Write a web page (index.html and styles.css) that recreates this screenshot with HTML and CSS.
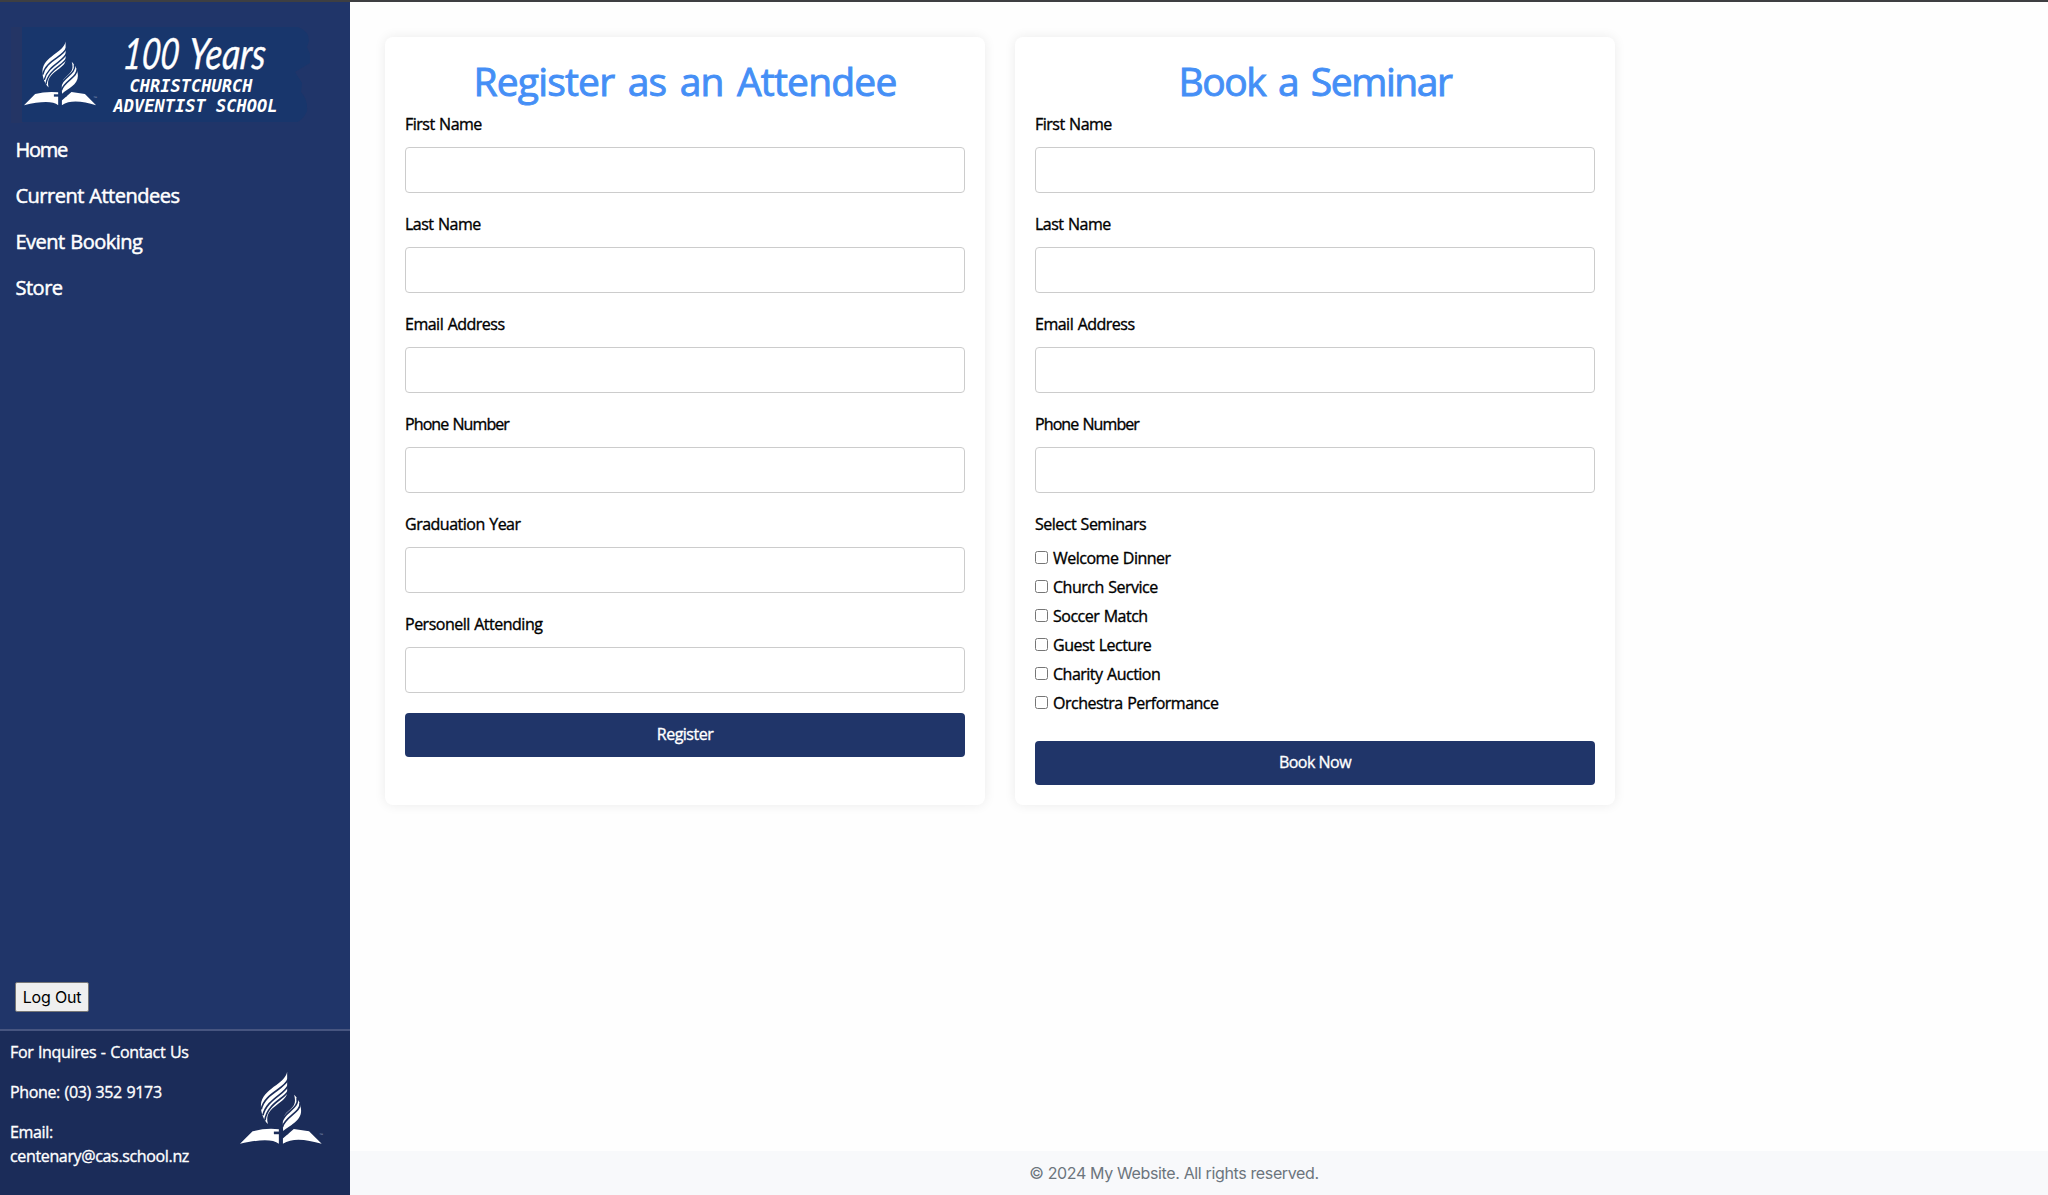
FILE: index.html
```html
<!DOCTYPE html>
<html lang="en">
<head>
<meta charset="utf-8">
<title>Christchurch Adventist School Centenary</title>
<link rel="stylesheet" href="styles.css">
</head>
<body>
<svg class="defs" width="0" height="0" aria-hidden="true">
  <symbol id="mark" viewBox="45 37 256 220" overflow="visible">
    <g fill="#fff">
      <path d="M187 38C181 76 112 88 108 138C107 162 117 184 129 195C122 166 134 154 160 134C180 119 187 112 187 98Z"/>
      <path d="M208 107C215 133 208 142 190 157C175 170 172 180 175 216C194 199 229 187 229 155C229 136 220 119 208 107Z"/>
      <path d="M45 255L83 217Q120 207 162 211V255C143 239 100 242 45 255Z"/>
      <path d="M174 255V239L207 210L253 217L291 255C246 242 204 235 174 255Z"/>
    </g>
    <g class="gap" fill="none" stroke-width="5">
      <path d="M190 60C180 91 119 102 109 151M190 79C181 105 125 121 114 169M190 96C180 119 127 133 120 184"/>
      <path d="M217 116C225 149 178 158 172 187M226 132C229 160 181 173 173 204"/>
      <path d="M147 222H190" stroke-width="8"/>
      <path d="M168 200V257" stroke-width="10"/>
    </g>
  </symbol>
</svg>
<div class="topline"></div>
<div class="app">
  <aside class="sidebar">
    <div class="logo">
      <svg class="logo-art" width="300" height="96" viewBox="0 0 300 96" role="img">
        <path fill="#243565" d="M0 0H12V96H0Z"/>
        <path fill="#18366c" d="M11 0H287Q298 4 298 14L296 20L299 27V36L284 45L291 56L290 65Q297 73 296 84Q292 93 286 95H11Z"/>
        <use href="#mark" x="13" y="14" width="75" height="65"/>
        <text class="tm" x="82" y="72">™</text>
        <text class="script" transform="translate(111 42) skewX(-6)" textLength="56" lengthAdjust="spacingAndGlyphs">100</text>
        <text class="script" transform="translate(177 42) skewX(-4)" textLength="77" lengthAdjust="spacingAndGlyphs">Years</text>
        <text class="school" x="118.500" y="65" textLength="123">CHRISTCHURCH</text>
        <text class="school" x="102.500" y="85" textLength="164">ADVENTIST SCHOOL</text>
      </svg>
    </div>
    <nav class="nav">
      <a class="tight">Home</a><a>Current Attendees</a><a>Event Booking</a><a>Store</a>
    </nav>
    <button class="logout">Log Out</button>
    <div class="contact">
      <div class="contact-text">
        <p>For Inquires - Contact Us</p>
        <p>Phone: (03) 352 9173</p>
        <p class="mail">Email: centenary@cas.school.nz</p>
      </div>
      <svg class="contact-mark" width="85" height="74"><use href="#mark" width="85" height="74"/><text class="tm" x="79" y="65">™</text></svg>
    </div>
  </aside>
  <div class="page">
    <main class="cards">
      <form class="card">
        <h1 class="t-register">Register as an Attendee</h1>
        <label>First Name</label><input type="text">
        <label>Last Name</label><input type="text">
        <label>Email Address</label><input type="text">
        <label class="narrow">Phone Number</label><input type="text">
        <label>Graduation Year</label><input type="text">
        <label>Personell Attending</label><input type="text">
        <button class="submit" type="button">Register</button>
      </form>
      <form class="card">
        <h1 class="t-book">Book a Seminar</h1>
        <label>First Name</label><input type="text">
        <label>Last Name</label><input type="text">
        <label>Email Address</label><input type="text">
        <label class="narrow">Phone Number</label><input type="text">
        <label class="group-label">Select Seminars</label>
        <div class="checks">
          <div class="check"><input type="checkbox"><span>Welcome Dinner</span></div>
          <div class="check"><input type="checkbox"><span>Church Service</span></div>
          <div class="check"><input type="checkbox"><span>Soccer Match</span></div>
          <div class="check"><input type="checkbox"><span>Guest Lecture</span></div>
          <div class="check"><input type="checkbox"><span>Charity Auction</span></div>
          <div class="check"><input type="checkbox"><span>Orchestra Performance</span></div>
        </div>
        <button class="submit" type="button">Book Now</button>
      </form>
    </main>
    <footer class="footer">© 2024 My Website. All rights reserved.</footer>
  </div>
</div>
</body>
</html>
```
FILE: styles.css
```css
* { box-sizing: border-box; }
body {
  margin: 0;
  height: 1195px;
  display: flex;
  flex-direction: column;
  overflow: hidden;
  background: #fefefe;
  color: #000;
  font: 500 16px/24px "Open Sans", sans-serif;
  letter-spacing: -0.5px;
  word-spacing: 0.8px;
  -webkit-text-stroke: 0.35px currentColor;
}
.defs { position: absolute; }
.topline { height: 2px; flex: none; background: #3e3f42; }
.app { flex: 1; display: flex; min-height: 0; }

.sidebar {
  --logo-bg: #203569;
  width: 350px;
  flex: none;
  display: flex;
  flex-direction: column;
  background: #203569;
  color: #fff;
}
.gap { stroke: var(--logo-bg); }
.logo { --logo-bg: #18366c; padding: 25px 0 0 11px; height: 125px; }
.logo-art { display: block; overflow: visible; -webkit-text-stroke: 0; }
.tm { font: 400 4px "Liberation Sans", sans-serif; fill: #8c9abb; letter-spacing: 0; }
.script {
  font: italic 400 43px Lato, sans-serif;
  fill: #fff;
  letter-spacing: 0;
  word-spacing: 0;
  stroke: #fff;
  stroke-width: 0.4px;
}
.school { font: italic 700 17px "DejaVu Sans Mono", monospace; fill: #fff; letter-spacing: 0; word-spacing: 0; }
.nav {
  display: flex;
  flex-direction: column;
  gap: 16px;
  padding: 8px 15.5px;
  font-size: 20px;
  line-height: 30px;
  letter-spacing: -0.5px;
  -webkit-text-stroke-width: 0.5px;
}
.tight { letter-spacing: -1.3px; }
.logout {
  margin: auto 0 17px 15px;
  width: 74px;
  height: 30px;
  padding: 0;
  border: 1px solid #767676;
  border-radius: 2px;
  background: #efefef;
  color: #000;
  font: 400 16px/24px Inter, sans-serif;
  letter-spacing: -0.2px;
  word-spacing: 0;
  -webkit-text-stroke: 0;
}
.contact {
  --logo-bg: #1b2c59;
  height: 166px;
  display: flex;
  border-top: 2px solid #475580;
  background: #1b2c59;
  padding: 9px 0 0 10px;
  letter-spacing: -0.35px;
}
.contact-text { width: 230px; }
.contact-text p { margin: 0 0 16px; }
.contact-text .mail { width: 190px; }
.contact-mark { margin-top: 31px; overflow: visible; -webkit-text-stroke: 0; }

.page { flex: 1; display: flex; flex-direction: column; }
.cards { flex: 1; display: flex; align-items: flex-start; gap: 30px; padding: 35px; }
.card {
  width: 600px;
  height: 768px;
  padding: 20px;
  border-radius: 8px;
  background: #fff;
  box-shadow: 0 0 12px rgba(0, 0, 0, 0.08);
}
h1 {
  margin: 0 0 7px;
  text-align: center;
  color: #458ff6;
  font-size: 39px;
  line-height: 48px;
  font-weight: 500;
  word-spacing: 4px;
  -webkit-text-stroke-width: 0.9px;
}
.t-register { letter-spacing: -0.8px; }
.t-book { letter-spacing: -1.45px; }
label { display: block; margin-bottom: 11px; }
.narrow { letter-spacing: -0.9px; }
.group-label { margin-bottom: 10px; }
input[type="text"] {
  display: block;
  width: 100%;
  height: 46px;
  margin: 0 0 19px;
  border: 1px solid #ccc;
  border-radius: 4px;
  background: #fff;
}
.check { display: flex; align-items: center; gap: 5px; margin-bottom: 5px; }
.check input { width: 13px; height: 13px; margin: 0 0 2px; }
.submit {
  display: block;
  width: 100%;
  height: 44px;
  margin-top: 20px;
  padding: 0 0 2px;
  border: 0;
  border-radius: 4px;
  background: #203569;
  color: #fff;
  font: inherit;
  letter-spacing: inherit;
}
.checks + .submit { margin-top: 26px; }
.footer {
  height: 44px;
  padding-right: 50px;
  background: #f8f9fb;
  color: #6c757d;
  text-align: center;
  font: 400 16px/44px Inter, sans-serif;
  letter-spacing: -0.36px;
  word-spacing: 0;
  -webkit-text-stroke: 0;
}
```
